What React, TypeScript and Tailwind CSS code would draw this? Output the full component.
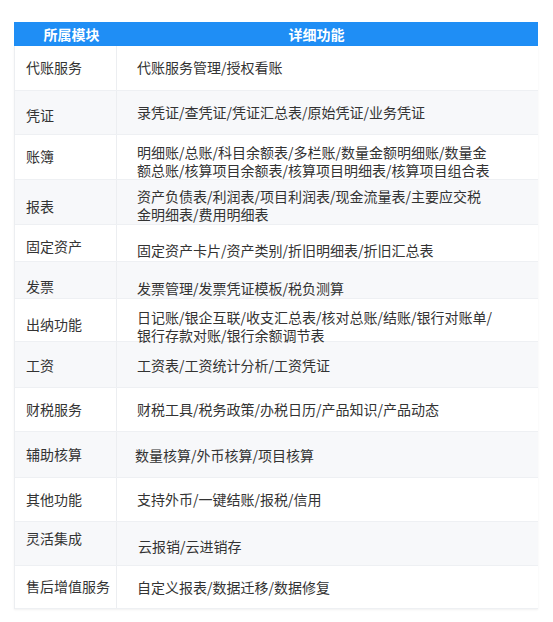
import React from "react";

type Row = { name: string; h: string; bg: string; lp: string; cp: string; lines: string[] };

const rows: Row[] = [
  { name: "代账服务", h: "h-[45px]", bg: "bg-white", lp: "pt-[12px]", cp: "pt-[12px] pl-5", lines: ["代账服务管理/授权看账"] },
  { name: "凭证", h: "h-[44px]", bg: "bg-[#f7f8fa]", lp: "pt-[15px]", cp: "pt-[12px] pl-5", lines: ["录凭证/查凭证/凭证汇总表/原始凭证/业务凭证"] },
  {
    name: "账簿",
    h: "h-[45px]",
    bg: "bg-white",
    lp: "pt-[12px]",
    cp: "pt-[8px] pl-5",
    lines: ["明细账/总账/科目余额表/多栏账/数量金额明细账/数量金", "额总账/核算项目余额表/核算项目明细表/核算项目组合表"],
  },
  {
    name: "报表",
    h: "h-[45px]",
    bg: "bg-[#f7f8fa]",
    lp: "pt-[17px]",
    cp: "pt-[7px] pl-5",
    lines: ["资产负债表/利润表/项目利润表/现金流量表/主要应交税", "金明细表/费用明细表"],
  },
  { name: "固定资产", h: "h-[37px]", bg: "bg-white", lp: "pt-[12px]", cp: "pt-[16px] pl-5", lines: ["固定资产卡片/资产类别/折旧明细表/折旧汇总表"] },
  { name: "发票", h: "h-[37px]", bg: "bg-[#f7f8fa]", lp: "pt-[15px]", cp: "pt-[17px] pl-5", lines: ["发票管理/发票凭证模板/税负测算"] },
  {
    name: "出纳功能",
    h: "h-[43px]",
    bg: "bg-white",
    lp: "pt-[16px]",
    cp: "pt-[9px] pl-5",
    lines: ["日记账/银企互联/收支汇总表/核对总账/结账/银行对账单/", "银行存款对账/银行余额调节表"],
  },
  { name: "工资", h: "h-[46px]", bg: "bg-[#f7f8fa]", lp: "pt-[14px]", cp: "pt-[14px] pl-5", lines: ["工资表/工资统计分析/工资凭证"] },
  { name: "财税服务", h: "h-[44px]", bg: "bg-white", lp: "pt-[12px]", cp: "pt-[12px] pl-5", lines: ["财税工具/税务政策/办税日历/产品知识/产品动态"] },
  { name: "辅助核算", h: "h-[46px]", bg: "bg-[#f7f8fa]", lp: "pt-[13px]", cp: "pt-[14px] pl-[18px]", lines: ["数量核算/外币核算/项目核算"] },
  { name: "其他功能", h: "h-[44px]", bg: "bg-white", lp: "pt-[12px]", cp: "pt-[12px] pl-5", lines: ["支持外币/一键结账/报税/信用"] },
  { name: "灵活集成", h: "h-[44px]", bg: "bg-[#f7f8fa]", lp: "pt-[7px]", cp: "pt-[15px] pl-[21px]", lines: ["云报销/云进销存"] },
  { name: "售后增值服务", h: "h-[43px]", bg: "bg-white", lp: "pt-[11px]", cp: "pt-[12px] pl-5", lines: ["自定义报表/数据迁移/数据修复"] },
];

export default function App() {
  return (
    <div
      className="w-[553px] h-[622px] bg-white overflow-hidden pt-[22px] pl-[14px]"
      style={{ fontFamily: '"Noto Sans CJK SC", "Noto Sans", sans-serif' }}
    >
      <div className="w-[524px]">
        <div className="grid grid-cols-[103px_421px] h-[24px] bg-[#1f8ef5] text-white text-[14px] font-bold">
          <div className="flex items-center justify-center pl-3">所属模块</div>
          <div className="flex items-center justify-center pr-[22px]">详细功能</div>
        </div>
        <div className="border-l border-[#eceef1] shadow-[0_1px_2px_rgba(0,0,0,0.06)]">
          {rows.map((r) => (
            <div
              key={r.name}
              className={`grid grid-cols-[102px_421px] border-b border-[#eef0f3] ${r.h} ${r.bg}`}
            >
              <div className={`pl-[11px] border-r border-[#eceef1] text-[14px] text-[#333] leading-[18px] ${r.lp}`}>
                {r.name}
              </div>
              <div className={`flex flex-col text-[14px] text-[#333] leading-[18px] whitespace-nowrap ${r.cp}`}>
                {r.lines.map((l) => (
                  <div key={l}>{l}</div>
                ))}
              </div>
            </div>
          ))}
        </div>
      </div>
    </div>
  );
}
